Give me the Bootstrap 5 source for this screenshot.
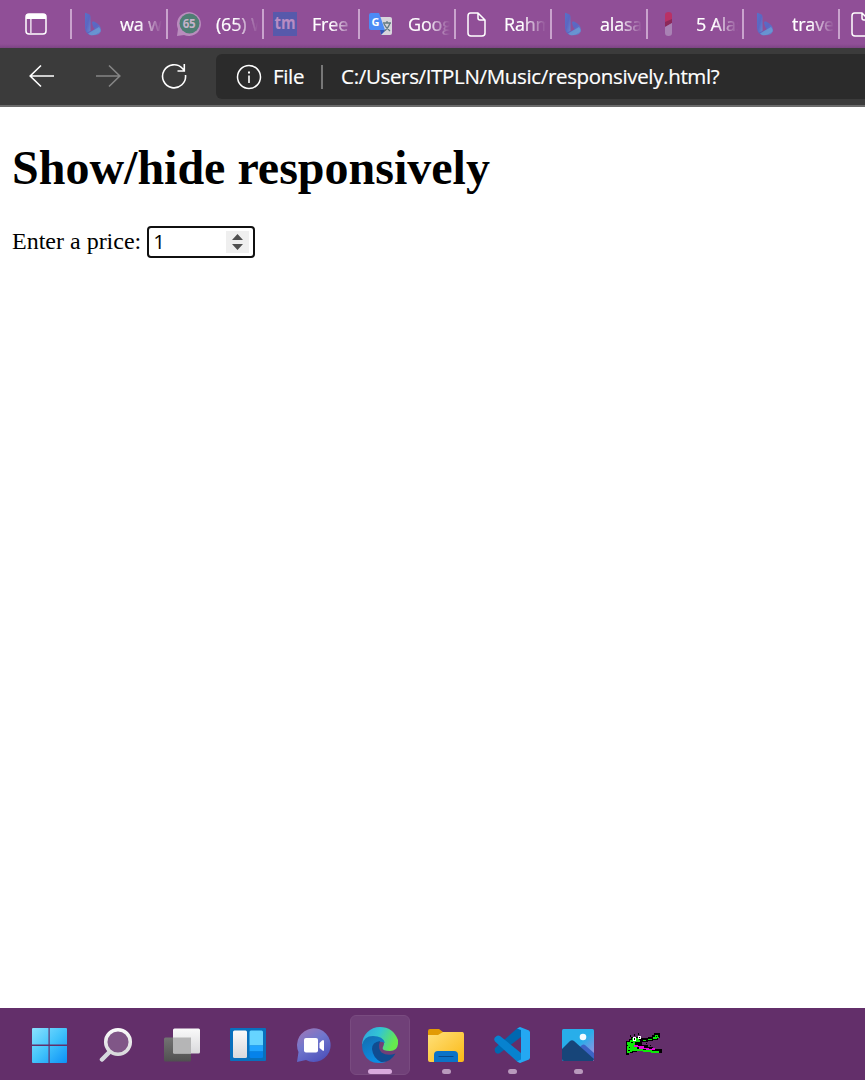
<!DOCTYPE html>
<html lang="en">
<head>
<meta charset="utf-8">
<title>Show/hide responsively</title>
<link href="https://cdn.jsdelivr.net/npm/bootstrap@5.3.0/dist/css/bootstrap.min.css" rel="stylesheet">
<style>
body{height:1080px;background:#fff;font-family:"Open Sans","Noto Sans",sans-serif}
svg{display:block;flex:none}
.tabstrip{height:48px;background:linear-gradient(#904f97 0 44px,#7d4484 48px);color:#fff}
.tab-actions{width:70px;padding-left:24px}
.tab-item{width:96px;height:48px;flex:none}
.tab-item:last-child{width:auto;flex:1 1 0;min-width:0}
.tab-item::before{content:"";width:2px;height:30px;background:#c9a3cd;flex:none}
.tab-icon{width:30px;margin-left:9px;margin-right:9px;flex:none}
.tab-label{width:42px;font-size:18px;letter-spacing:-.2px;line-height:30px;margin-top:-1px;-webkit-text-stroke:.2px #fff;-webkit-mask-image:linear-gradient(90deg,#000 45%,transparent)}
.toolbar{height:59px;background:#3b3b3b;border-bottom:2px solid #6b6b6b;color:#fff;padding-left:5px}
.nav-btn{width:66px;flex:none;padding-bottom:2px}
.address{height:45px;margin-left:13px;background:#2b2b2b;border-radius:6px 0 0 6px;font-size:20.5px;padding-left:20px;line-height:44px}
.address span{letter-spacing:-.34px;padding-bottom:2px;-webkit-text-stroke:.2px #fff}
.address .divider{width:2px;height:24px;background:#777;margin:0 18px 0 17px;padding:0}
.page{font-family:"Liberation Serif",serif;color:#000;padding:33px 12px 0}
.page h1{font-size:48px;font-weight:700;line-height:56px;margin-bottom:30px}
.price{font-size:24px;line-height:32px}
.price-label{margin-top:-2px}
.price-box{width:108px;height:32px;border:2px solid #101010;border-radius:4px;margin-left:6px;padding:0 4px 0 5px;font-family:"Open Sans",sans-serif;font-size:20.5px;line-height:26px}
.price-box .amount{padding-bottom:2px;margin-left:-1px}
.spinner-box{width:23px;height:22px;background:#efefef}
.taskbar{height:72px;background:#632f6a;padding-left:16px}
.task{width:66.1px;height:72px;flex:none;position:relative}
.task.current::before{content:"";position:absolute;left:4px;top:7px;width:60px;height:60px;border-radius:6px;background:#704078;border:1px solid #794b80}
.task svg{position:relative}
.task i{position:absolute;bottom:6px;left:29px;width:9px;height:5px;border-radius:3px;background:#b99abd}
.task.current i{left:22px;width:24px;background:#d8a9dc}
</style>
<script src="https://cdn.jsdelivr.net/npm/bootstrap@5.3.0/dist/js/bootstrap.bundle.min.js"></script>
</head>
<body class="d-flex flex-column overflow-hidden">
<svg width="0" height="0" class="position-absolute">
<defs>
<linearGradient id="gb" x2="1" y2="1"><stop stop-color="#5573c8"/><stop offset=".5" stop-color="#5c66c2"/><stop offset="1" stop-color="#658bd0"/></linearGradient>
<linearGradient id="gw" gradientUnits="userSpaceOnUse" x2="35" y2="35"><stop stop-color="#8be2ff"/><stop offset=".5" stop-color="#42c3fb"/><stop offset="1" stop-color="#0c91f7"/></linearGradient>
<linearGradient id="gs" x2="0" y2="1"><stop stop-color="#fafafa"/><stop offset="1" stop-color="#d9d9dc"/></linearGradient>
<linearGradient id="gg" x2="0" y2="1"><stop stop-color="#737373"/><stop offset="1" stop-color="#505050"/></linearGradient>
<linearGradient id="gc" x2=".6" y2="1"><stop stop-color="#a477b5"/><stop offset=".5" stop-color="#7077cd"/><stop offset="1" stop-color="#5054bd"/></linearGradient>
<linearGradient id="ge" x2="1" y2=".35"><stop stop-color="#2f9fe0"/><stop offset=".5" stop-color="#32c5d4"/><stop offset="1" stop-color="#66e94d"/></linearGradient>
<linearGradient id="ge2" x2=".5" y2="1"><stop stop-color="#146cad"/><stop offset="1" stop-color="#0b8ee5"/></linearGradient>
<linearGradient id="gf" x2="1" y2="1"><stop stop-color="#ffe07a"/><stop offset="1" stop-color="#fbb915"/></linearGradient>
<linearGradient id="gp" x2="1" y2="1"><stop offset=".5" stop-color="#28aeea"/><stop offset="1" stop-color="#b888dd"/></linearGradient>
<symbol id="bing" viewBox="0 0 16 24"><path d="M0 1.500Q0 .5 1 1l3.500 1.500Q5.500 3 5.500 5v14L2 21q-2-2-2-5z" fill="url(#gb)"/><path d="M1 19.500Q4 21 10 17q-2-1-3-6.500Q7 9 9 9.500q7 3 7 8.500 0 2.500-2 4-4 2-9 1-3-1-4-3.500" fill="url(#gb)"/><path d="M3 21.500 14 15q2 2 1.500 4.500Q10 24 5 23z" fill="#6b9fd4" opacity=".75"/></symbol>
<symbol id="doc" viewBox="0 0 19 25"><path d="M3.500 1H11l7 7v13q0 3-3 3H4q-3 0-3-3V4q0-3 2.500-3zM11 1v5q0 2 2 2h5" fill="none" stroke="#fff" stroke-width="1.500" stroke-linejoin="round"/></symbol>
</defs></svg>

<header>
<div class="tabstrip d-flex align-items-center overflow-hidden">
 <div class="tab-actions flex-shrink-0"><svg width="24" height="24" viewBox="0 0 24 24"><rect x="2" y="2" width="20" height="20" rx="3" fill="none" stroke="#fff" stroke-width="1.500"/><path d="M2 7V4q0-2 2-2h16q2 0 2 2v3zM6.300 7h1.200v14H6.300z" fill="#fff"/></svg></div>
 <div class="tab-item d-flex align-items-center"><span class="tab-icon"><svg width="16" height="24" class="ms-1"><use href="#bing"/></svg></span><span class="tab-label overflow-hidden text-nowrap">wa w</span></div>
 <div class="tab-item d-flex align-items-center"><span class="tab-icon"><svg width="26" height="26" viewBox="0 0 26 26"><path d="M0 25 1 18A12 12 0 1 1 7 24z" fill="#b98dbd"/><circle cx="12.500" cy="12.500" r="10" fill="#4f7e74"/><text x="12" y="17" text-anchor="middle" font-size="11.500" font-weight="700" fill="#c5b2c9" letter-spacing="-.3">65</text></svg></span><span class="tab-label overflow-hidden text-nowrap">(65) W</span></div>
 <div class="tab-item d-flex align-items-center"><span class="tab-icon"><svg width="24" height="24" viewBox="0 0 24 24"><rect width="24" height="24" fill="#5759ab"/><text x="1.500" y="17" font-size="17" font-weight="700" fill="#b88cc3" textLength="21" lengthAdjust="spacingAndGlyphs">tm</text></svg></span><span class="tab-label overflow-hidden text-nowrap">Free</span></div>
 <div class="tab-item d-flex align-items-center"><span class="tab-icon"><svg width="24" height="24" viewBox="0 0 24 24"><path d="M10 5h11q2 0 2 2v14q0 2-2 2h-9z" fill="#d8d5dc"/><path d="M11 18h6l-5 5z" fill="#3454b5"/><path d="M2 1h8l6 17H2q-2 0-2-2V3q0-2 2-2z" fill="#4c8bf5"/><text x="2.500" y="13.500" font-size="11" font-weight="700" fill="#fff">G</text><path d="M14 11h8m-4-2v2m3 0q-2 6-6 8m0-7q2 4 6 7" fill="none" stroke="#637b82" stroke-width="1.300"/></svg></span><span class="tab-label overflow-hidden text-nowrap">Goog</span></div>
 <div class="tab-item d-flex align-items-center"><span class="tab-icon"><svg width="19" height="25" style="margin-left:2px"><use href="#doc"/></svg></span><span class="tab-label overflow-hidden text-nowrap">Rahm</span></div>
 <div class="tab-item d-flex align-items-center"><span class="tab-icon"><svg width="16" height="24" class="ms-1"><use href="#bing"/></svg></span><span class="tab-label overflow-hidden text-nowrap">alasa</span></div>
 <div class="tab-item d-flex align-items-center"><span class="tab-icon"><svg width="24" height="24" viewBox="0 0 24 24"><path d="M8 12V3q0-3 3.500-3T15 3v7z" fill="#b93165"/><path d="m8 10 7-3v4l-7 4z" fill="#8c285a"/><path d="m8 15 7-4v10q0 3-3.500 3T8 21z" fill="#a982b4"/></svg></span><span class="tab-label overflow-hidden text-nowrap">5 Alas</span></div>
 <div class="tab-item d-flex align-items-center"><span class="tab-icon"><svg width="16" height="24" class="ms-1"><use href="#bing"/></svg></span><span class="tab-label overflow-hidden text-nowrap">trave</span></div>
 <div class="tab-item d-flex align-items-center overflow-hidden"><span class="tab-icon"><svg width="19" height="25" style="margin-left:2px"><use href="#doc"/></svg></span></div>
</div>
<div class="toolbar d-flex align-items-center overflow-hidden">
 <div class="nav-btn ps-2 d-flex justify-content-center"><svg width="26" height="24" viewBox="0 0 26 24" fill="none" stroke="#fff" stroke-width="1.600"><path d="M25 12H1M12 1.500 1.200 12 12 22.500"/></svg></div>
 <div class="nav-btn ps-2 d-flex justify-content-center"><svg width="26" height="24" viewBox="0 0 26 24" fill="none" stroke="#858585" stroke-width="1.600"><path d="M1 12h24M14 1.500 24.800 12 14 22.500"/></svg></div>
 <div class="nav-btn ps-2 d-flex justify-content-center"><svg width="26" height="26" viewBox="0 0 26 26" fill="none" stroke="#fff" stroke-width="1.600"><path d="M24.500 12A11.500 11.500 0 1 1 21.500 5.500L23.300 7.500M23.300 1v7H16.500"/></svg></div>
 <div class="address d-flex align-items-center flex-grow-1 text-nowrap">
  <svg width="26" height="26" viewBox="0 0 26 26"><circle cx="13" cy="13" r="11.500" fill="none" stroke="#fff" stroke-width="1.500"/><path d="M12.200 11.500h1.600V19h-1.600zM12 7.500h2v2h-2z" fill="#fff"/></svg>
  <span style="margin-left:11px">File</span><span class="divider"></span><span>C:/Users/ITPLN/Music/responsively.html?</span>
 </div>
</div>
</header>

<main class="page flex-grow-1">
 <h1>Show/hide responsively</h1>
 <div class="price d-flex align-items-center"><span class="price-label">Enter a price:</span>
  <div class="price-box d-flex align-items-center justify-content-between"><span class="amount">1</span><span class="spinner-box"><svg width="23" height="22" viewBox="0 0 23 22"><path d="m6 9 5.500-6L17 9zm0 4 5.500 6L17 13z" fill="#505050"/></svg></span></div>
 </div>
</main>

<footer class="taskbar d-flex">
 <div class="task d-flex align-items-center justify-content-center"><svg width="35" height="35" viewBox="0 0 35 35" style="top:1.500px"><path fill="url(#gw)" d="M0 1q0-1 1-1h15.500v16.500H0zM17.700 0H34q1 0 1 1v15.500H17.700zM0 18h16.500v17H1q-1 0-1-1zM17.700 18H35v16q0 1-1 1H17.700z"/></svg></div>
 <div class="task d-flex align-items-center justify-content-center"><svg width="34" height="36" viewBox="0 0 34 36" style="top:1px;left:1px"><path d="m3 32.500 7.500-7.500" stroke="#d5d8de" stroke-width="4.500" stroke-linecap="round"/><circle cx="19" cy="15" r="12.300" fill="#805687" stroke="url(#gs)" stroke-width="3.500"/></svg></div>
 <div class="task d-flex align-items-center justify-content-center"><svg width="36" height="34" viewBox="0 0 36 34" style="top:1px;left:1px"><rect y="9.500" width="27" height="24" rx="1.500" fill="url(#gg)"/><rect x="9" y=".5" width="27" height="25" rx="1.500" fill="url(#gs)"/><path d="M9 9.500h18v16H10q-1 0-1-1z" fill="#b5b5b6"/></svg></div>
 <div class="task d-flex align-items-center justify-content-center"><svg width="36" height="33" viewBox="0 0 36 33" style="top:.5px;left:.6px"><rect width="36" height="33" rx="1" fill="#0870bd"/><rect x="3" y="2.500" width="14" height="27.500" rx="1.500" fill="url(#gs)"/><path d="M19.500 4q0-1.500 1.500-1.500h10.500Q33 2.500 33 4v13.500H19.500z" fill="#66d4ff"/><path d="M19.500 17.500H33v6H19.500z" fill="#20a4ff"/><path d="M19.500 23.500H33v5q0 1.500-1.500 1.500H21q-1.500 0-1.500-1.500z" fill="#0582ea"/></svg></div>
 <div class="task d-flex align-items-center justify-content-center"><svg width="34" height="35" viewBox="0 0 34 35" style="top:1px;left:.5px"><path d="M0 34 1.500 24A16.800 16.800 0 1 1 9 32z" fill="url(#gc)"/><rect x="7" y="10" width="14" height="14.500" rx="2" fill="#fff"/><path d="m22.500 15 2.500-2.500q2-1.500 2 1v8q0 2.500-2 .5L22.500 20z" fill="#fff"/></svg></div>
 <div class="task current d-flex align-items-center justify-content-center"><svg width="36" height="36" viewBox="0 0 36 36" style="top:1px"><path d="M0 18A18 18 0 0 1 18 0Q31 0 36 13q1 11-8 11-9 0-7-4 3-6-3-9Q7 8 0 18z" fill="url(#ge)"/><path d="M0 18Q2 9 11 9q10 0 12 7-9-4-10 5-1 9 11 14Q8 39 2 27 0 23 0 18z" fill="url(#ge2)"/><path d="M18 14q-8 1-8 8 1 9 9 13 9 1 14.500-8.500-8 3-14-1-4-4-1.500-11.500" fill="#104c91"/></svg><i></i></div>
 <div class="task d-flex align-items-center justify-content-center"><svg width="36" height="33" viewBox="0 0 36 33" style="top:1px"><path d="M0 2Q0 0 2 0h9l4 3h20v12H0z" fill="#e29b05"/><path d="M0 6h10l5-3h19q2 0 2 2v26q0 2-2 2H2q-2 0-2-2z" fill="url(#gf)"/><path d="M6 33v-7q0-4 4-4h16q4 0 4 4v7z" fill="#0b73c8"/><path d="M11 27.500h14" stroke="#0a4988" stroke-width="1.200" stroke-linecap="round"/></svg><i></i></div>
 <div class="task d-flex align-items-center justify-content-center"><svg width="36" height="36" viewBox="0 0 36 36" style="top:1px"><path d="M27 10 6 26q-2 1.500-4 0-2-2-1-5L23 1.500 27 0z" fill="#0068b0"/><path d="M27 26 6 9Q4 8 2 9.500q-3 2-1 5L23 34.500l4 1.500z" fill="#0782cf"/><path d="m23 1.500 3-1.500 9 3.500 1 1.500v26l-1 1.500-9 3.500-3-1.500 4-2V3z" fill="#24a8f2"/></svg><i></i></div>
 <div class="task d-flex align-items-center justify-content-center"><svg width="32" height="32" viewBox="0 0 32 32" style="top:.5px"><rect width="32" height="32" rx="1.500" fill="url(#gp)"/><circle cx="21" cy="8" r="3.300" fill="#f3fbff"/><path d="m15 21 5-5q1.500-1 3 0l9 8v7H15z" fill="#3c63c5"/><path d="m0 20 8-8q2-1.500 4 0l20 18-1 2H2q-2 0-2-2z" fill="#174579"/></svg><i></i></div>
 <div class="task d-flex align-items-center justify-content-center"><svg width="36" height="24" viewBox="0 0 36 24" shape-rendering="crispEdges" style="left:-.4px">
  <path d="M0 9h3V7h2V5h8v1h9V5h4V3h2V1h6v5h-2v2h-5v1h-5v1h-6v1h5v2h4v1h4v3h7v4h-9v-1h-8v-1h-8v1H7v1H3v2H0z" fill="#000"/>
  <path d="M16 11h4v1h4v2h5v2h-2v-1h-5v-2h-6z" fill="#632f6a"/>
  <path d="M1 10h3V8h2V6h7v2h9V7h5V5h2V3h4v3h-2v1h-5v1h-6v1h-6v1H9v3H8v2h3v2h6v1h9v1h7v2h-8v-1h-8v-1H6v1H4v1H1z" fill="#0eea08"/>
  <path d="M8 13h4v1h6v2h5v1h3v1h-6v-1h-7v-2H8zM26 16h3v2h-3z" fill="#e30adb"/>
  <path d="M1 13h1v1H1zM3 15h1v1H3zM2 18h2v1H2zM5 10h2v1H5zM14 8h3v1h-3zM30 4h1v1h-1zM32 3h1v2h-1zM4 3h1v2H4zM8 2h1v2H8zM12 1h1v2h-1z" fill="#000"/>
  <path d="M7 5h3v4H7zM12 4h3v3h-3z" fill="#fff"/><path d="M8 6h1v2H8zM13 5h1v1h-1z" fill="#000"/></svg></div>
</footer>
</body>
</html>
